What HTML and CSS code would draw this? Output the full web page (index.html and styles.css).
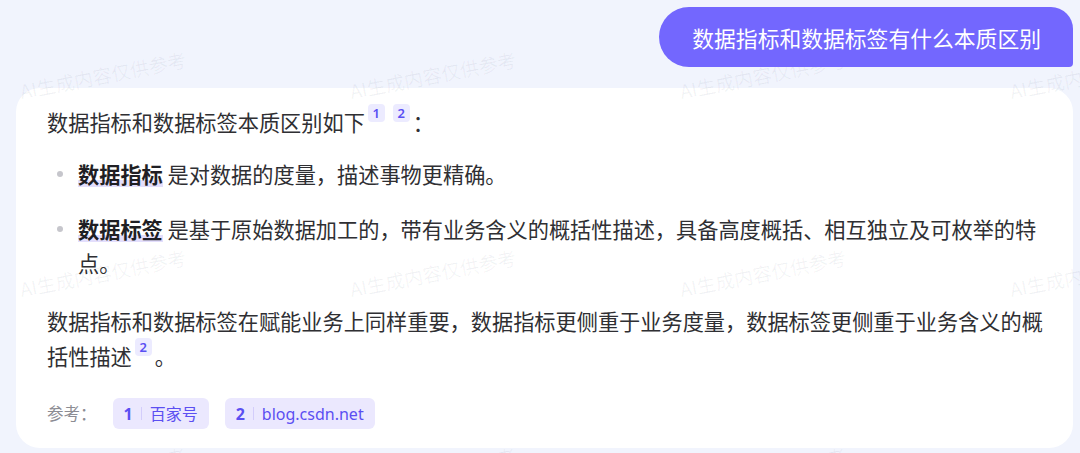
FILE: index.html
```html
<!DOCTYPE html>
<html lang="zh-CN">
<head>
<meta charset="utf-8">
<title>数据指标和数据标签</title>
<link rel="stylesheet" href="styles.css">
</head>
<body>
<div class="page">
  <div class="user-row">
    <div class="bubble">数据指标和数据标签有什么本质区别</div>
  </div>
  <div class="card">
    <p class="para">数据指标和数据标签本质区别如下<span class="cite">1</span><span class="cite">2</span>：</p>
    <ul class="list">
      <li><strong class="hl">数据指标</strong> 是对数据的度量，描述事物更精确。</li>
      <li><strong class="hl">数据标签</strong> 是基于原始数据加工的，带有业务含义的概括性描述，具备高度概括、相互独立及可枚举的特点。</li>
    </ul>
    <p class="para para-gap">数据指标和数据标签在赋能业务上同样重要，数据指标更侧重于业务度量，数据标签更侧重于业务含义的概括性描述<span class="cite">2</span>。</p>
    <div class="refs">
      <span class="refs-label">参考：</span>
      <span class="chip"><span class="chip-num">1</span><span class="chip-div"></span><span class="chip-text">百家号</span></span>
      <span class="chip"><span class="chip-num">2</span><span class="chip-div"></span><span class="chip-text">blog.csdn.net</span></span>
    </div>
  </div>
  <div class="watermarks" aria-hidden="true">
    <span class="wm">AI生成内容仅供参考</span><span class="wm">AI生成内容仅供参考</span><span class="wm">AI生成内容仅供参考</span><span class="wm">AI生成内容仅供参考</span>
    <span class="wm">AI生成内容仅供参考</span><span class="wm">AI生成内容仅供参考</span><span class="wm">AI生成内容仅供参考</span><span class="wm">AI生成内容仅供参考</span>
    <span class="wm">AI生成内容仅供参考</span><span class="wm">AI生成内容仅供参考</span><span class="wm">AI生成内容仅供参考</span><span class="wm">AI生成内容仅供参考</span>
  </div>
</div>
</body>
</html>
```

FILE: styles.css
```css
html, body {
  margin: 0;
  padding: 0;
  background: #f1f4fd;
  height: 453px;
  overflow: hidden;
}

.page {
  position: relative;
  width: 1080px;
  height: 453px;
  overflow: hidden;
  font-family: "Noto Sans CJK SC", "Noto Sans", sans-serif;
  color: #2f2f33;
}

.user-row {
  display: flex;
  justify-content: flex-end;
  padding: 7px 7px 0 0;
  position: relative;
  z-index: 3;
}

.bubble {
  height: 60px;
  box-sizing: border-box;
  display: flex;
  align-items: center;
  padding: 0 32px 0 33px;
  background: #7367fe;
  color: #ffffff;
  font-size: 21.8px;
  border-radius: 30px 22px 4px 30px;
}

.card {
  margin: 21px 7px 0 16px;
  background: #ffffff;
  border-radius: 24px;
  padding: 16px 28px 19px 31px;
  font-size: 21.2px;
  line-height: 34px;
  position: relative;
  z-index: 1;
}

.para {
  margin: 0;
}

.para-gap {
  margin-top: 24px;
}

.list {
  list-style: none;
  margin: 18px 0 0 0;
  padding: 0;
  display: flex;
  flex-direction: column;
  gap: 21px;
}

.list li {
  position: relative;
  padding-left: 31px;
}

.list li::before {
  content: "";
  position: absolute;
  left: 10px;
  top: 14px;
  width: 6px;
  height: 6px;
  border-radius: 50%;
  background: #c6c6cc;
}

.hl {
  font-weight: 700;
  color: #1f1f24;
  background: linear-gradient(to bottom, transparent 72%, #e3defc 72%, #e3defc 92%, transparent 92%);
}

.cite {
  display: inline-block;
  width: 17px;
  height: 18px;
  line-height: 18px;
  font-size: 13px;
  text-align: center;
  color: #5a4ff3;
  background: #ecebff;
  border-radius: 4px;
  margin: 0 3px 0 3px;
  vertical-align: 13px;
  font-family: "Noto Sans", sans-serif;
  font-weight: 600;
}

.cite + .cite {
  margin-left: 5px;
}

.refs {
  margin-top: 25px;
  display: flex;
  align-items: center;
  gap: 16px;
  line-height: 1;
}

.refs-label {
  font-size: 16.5px;
  color: #8c8c93;
}

.chip {
  display: inline-flex;
  align-items: center;
  height: 31px;
  padding: 0 11px;
  border-radius: 6px;
  background: #ebe8fe;
  color: #5b4ff2;
  font-size: 16px;
  gap: 8px;
}

.chip-num {
  font-weight: 700;
  font-family: "Noto Sans", sans-serif;
}

.chip-div {
  width: 1px;
  height: 13px;
  background: #d3cdfb;
}

.chip-text {
  font-family: "Noto Sans", "Noto Sans CJK SC", sans-serif;
}

.watermarks {
  position: absolute;
  inset: 0;
  pointer-events: none;
  z-index: 2;
  display: grid;
  grid-template-columns: repeat(4, 330px);
  grid-auto-rows: 198px;
  padding: 80px 0 0 22px;
  align-items: start;
  justify-items: start;
}

.wm {
  display: block;
  white-space: nowrap;
  font-size: 19px;
  line-height: 22px;
  color: rgba(40, 50, 90, 0.06);
  transform: rotate(-11deg);
  transform-origin: 0 100%;
}
```
